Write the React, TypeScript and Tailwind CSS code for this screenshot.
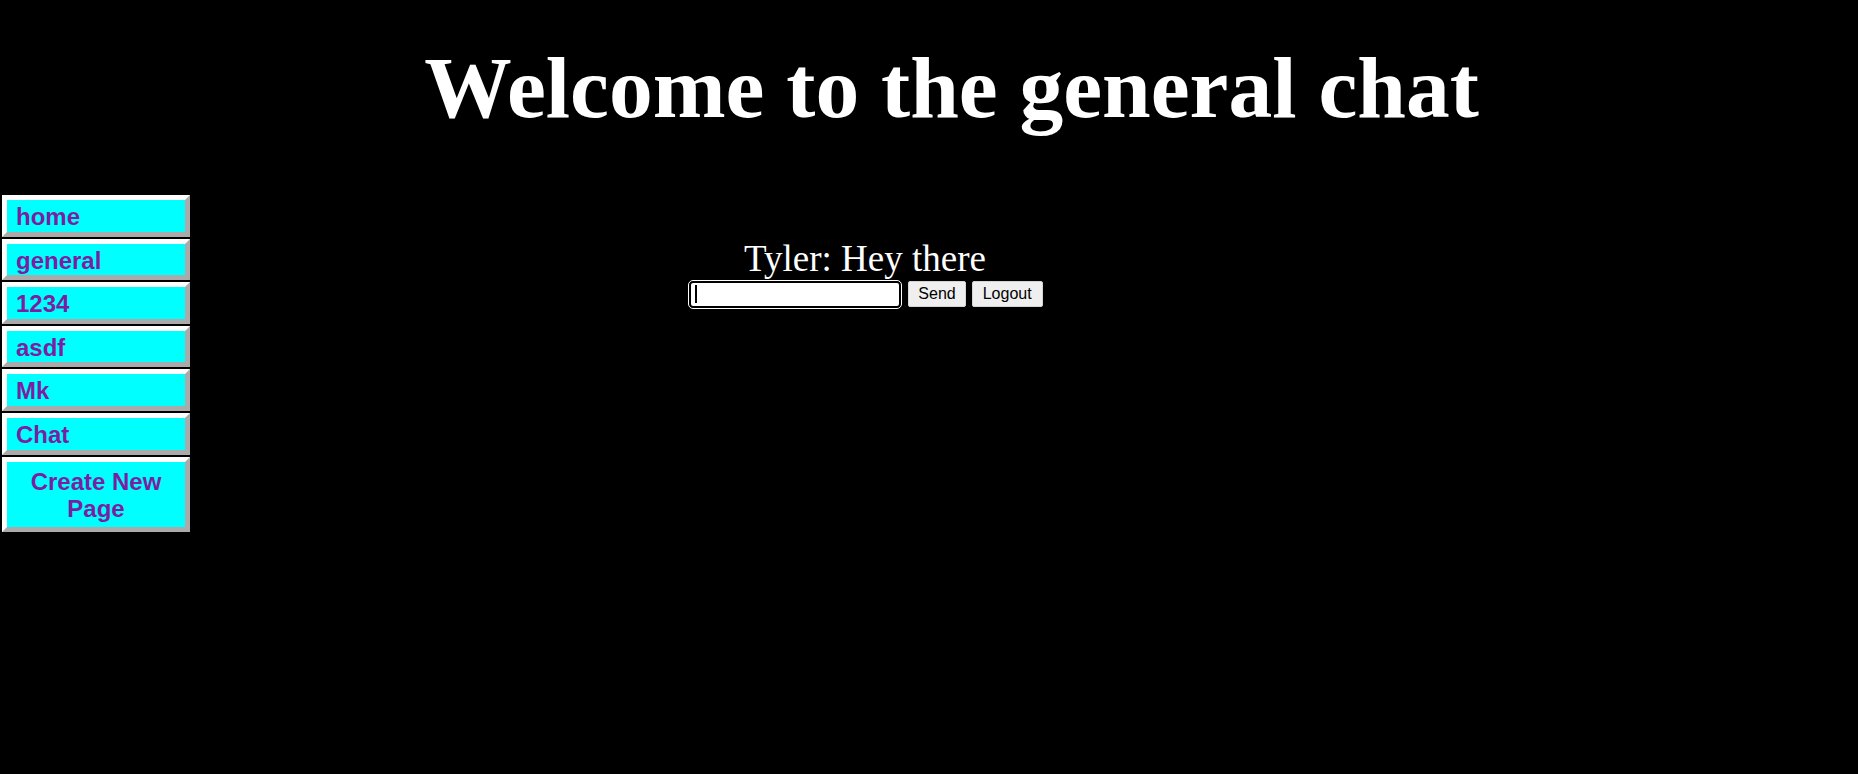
import React from 'react';

const pages = ['home', 'general', '1234', 'asdf', 'Mk', 'Chat'];

const navBtn =
  "block w-[188px] ml-[2px] mb-[2px] bg-[#00ffff] border-[5px] border-solid border-t-white border-l-white border-r-[#aaaaaa] border-b-[#aaaaaa] text-[24px] font-bold text-[#7b1fa2] leading-[27.6px]";

export default function App() {
  return (
    <div className="min-h-screen w-full bg-black text-white font-['Liberation_Serif','Times_New_Roman',serif]">
      {/* Header */}
      <h1 className="pt-[38px] pl-[45px] text-center text-[87.5px] font-bold leading-[100px]">
        Welcome to the general chat
      </h1>

      <div className="flex mt-[57px]">
        {/* Sidebar */}
        <nav className="flex flex-col w-[192px] font-['Liberation_Sans',Arial,sans-serif]">
          {pages.map((p) => (
            <a key={p} href="#" className={`${navBtn} pt-[3px] pb-[1px] text-left pl-[9px]`}>
              {p}
            </a>
          ))}
          <button className={`${navBtn} pt-[6px] pb-[4px] text-center px-[9px]`}>Create New Page</button>
        </nav>

        {/* Chat */}
        <main className="flex-1 pr-[324px] pt-[43px] flex flex-col items-center">
          <p className="text-[37px] leading-[42.5px] ml-[4px]">Tyler: Hey there</p>
          <div className="flex items-center ml-[5px] font-['Liberation_Sans',Arial,sans-serif]">
            <div className="w-[212px] h-[27px] ml-[1px] bg-white rounded-[4px] border-2 border-black outline outline-1 outline-white flex items-center">
              <span className="ml-[4px] w-[1.5px] h-[18px] bg-black" />
            </div>
            <button className="ml-[7px] h-[26px] px-[9px] bg-[#efefef] border border-[#d4d4d4] rounded-[2px] text-[16px] leading-[18px] text-black">
              Send
            </button>
            <button className="ml-[6px] h-[26px] px-[10px] bg-[#efefef] border border-[#d4d4d4] rounded-[2px] text-[16px] leading-[18px] text-black">
              Logout
            </button>
          </div>
        </main>
      </div>
    </div>
  );
}
